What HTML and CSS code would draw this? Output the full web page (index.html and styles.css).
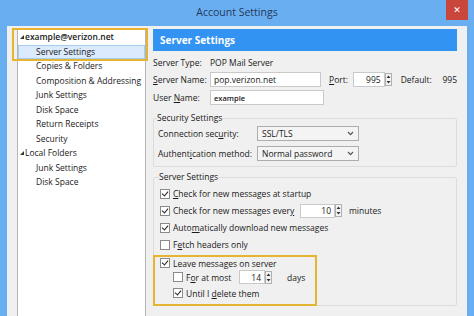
FILE: index.html
```html
<!DOCTYPE html>
<html lang="en">
<head>
    <meta charset="UTF-8">
    <title>Account Settings</title>
    <link rel="stylesheet" href="styles.css">
</head>
<body>
    <div class="window">
        <div class="titlebar">
            <div></div>
            <div class="title">Account Settings</div>
            <div class="close-wrap"><div class="close-btn">✕</div></div>
        </div>

        <div class="client">
            <!-- account tree -->
            <div class="tree">
                <div class="mark mark-tree">
                    <div class="node top account"><span class="twisty"></span>example@verizon.net</div>
                    <div class="node child selected">Server Settings</div>
                </div>
                <div class="node child">Copies &amp; Folders</div>
                <div class="node child">Composition &amp; Addressing</div>
                <div class="node child">Junk Settings</div>
                <div class="node child">Disk Space</div>
                <div class="node child">Return Receipts</div>
                <div class="node child">Security</div>
                <div class="node top"><span class="twisty"></span>Local Folders</div>
                <div class="node child">Junk Settings</div>
                <div class="node child">Disk Space</div>
            </div>

            <!-- settings pane -->
            <div class="pane">
                <div class="pane-header">Server Settings</div>

                <div class="row row-first">
                    <span class="label">Server Type:</span>
                    <span class="value">POP Mail Server</span>
                </div>
                <div class="row">
                    <span class="label"><u>S</u>erver Name:</span>
                    <span class="field field-wide">pop.verizon.net</span>
                    <span class="port-label"><u>P</u>ort:</span>
                    <span class="field field-port">995</span>
                    <span class="spin"><svg width="5" height="11" viewBox="0 0 5 11"><path d="M0.5 4L2.5 1.5L4.5 4Z M0.5 7L2.5 9.5L4.5 7Z" fill="#333"/></svg></span>
                    <span class="default-label">Default:</span>
                    <span class="default-value">995</span>
                </div>
                <div class="row">
                    <span class="label">User <u>N</u>ame:</span>
                    <span class="field field-wide field-bold">example</span>
                </div>

                <fieldset class="group group-security">
                    <legend>Security Settings</legend>
                    <div class="row">
                        <span class="sec-label">Connection sec<u>u</u>rity:</span>
                        <span class="select">SSL/TLS<svg class="chev" width="7" height="5" viewBox="0 0 7 5"><path d="M1 1L3.5 3.6L6 1" stroke="#555" stroke-width="1.2" fill="none"/></svg></span>
                    </div>
                    <div class="row">
                        <span class="sec-label">Authent<u>i</u>cation method:</span>
                        <span class="select">Normal password<svg class="chev" width="7" height="5" viewBox="0 0 7 5"><path d="M1 1L3.5 3.6L6 1" stroke="#555" stroke-width="1.2" fill="none"/></svg></span>
                    </div>
                </fieldset>

                <fieldset class="group group-server">
                    <legend>Server Settings</legend>
                    <div class="check-row">
                        <span class="box checked"></span><span><u>C</u>heck for new messages at startup</span>
                    </div>
                    <div class="check-row">
                        <span class="box checked"></span><span class="every">Check for new messages ever<u>y</u></span>
                        <span class="field field-num">10</span>
                        <span class="spin"><svg width="5" height="11" viewBox="0 0 5 11"><path d="M0.5 4L2.5 1.5L4.5 4Z M0.5 7L2.5 9.5L4.5 7Z" fill="#333"/></svg></span>
                        <span class="unit">minutes</span>
                    </div>
                    <div class="check-row">
                        <span class="box checked"></span><span>Auto<u>m</u>atically download new messages</span>
                    </div>
                    <div class="check-row">
                        <span class="box"></span><span>F<u>e</u>tch headers only</span>
                    </div>
                    <div class="mark mark-leave">
                        <div class="check-row leave">
                            <span class="box checked"></span><span>Leave messages on server</span>
                        </div>
                        <div class="check-row nested">
                            <span class="box"></span><span class="at-most">F<u>o</u>r at most</span>
                            <span class="field field-days">14</span>
                            <span class="spin"><svg width="5" height="11" viewBox="0 0 5 11"><path d="M0.5 4L2.5 1.5L4.5 4Z M0.5 7L2.5 9.5L4.5 7Z" fill="#333"/></svg></span>
                            <span class="unit">days</span>
                        </div>
                        <div class="check-row nested">
                            <span class="box checked"></span><span>Until I <u>d</u>elete them</span>
                        </div>
                    </div>
                </fieldset>
            </div>
        </div>
    </div>
</body>
</html>
```

FILE: styles.css
```css
body {
    margin: 0;
    font-family: "Open Sans", "Noto Sans", sans-serif;
    font-size: 8.5px;
    color: #1a1a1a;
}

.window {
    width: 474px;
    height: 316px;
    background-color: #6aaef2;
    display: flex;
    flex-direction: column;
    overflow: hidden;
}

.titlebar {
    height: 26px;
    flex-shrink: 0;
    display: grid;
    grid-template-columns: 1fr auto 1fr;
}

.title {
    font-size: 10.5px;
    line-height: 25px;
    color: #24395a;
}

.close-wrap {
    display: flex;
    justify-content: flex-end;
    padding-right: 6px;
}

.close-btn {
    width: 22px;
    height: 20px;
    background-color: #c8463c;
    color: #ffffff;
    font-family: "DejaVu Sans", sans-serif;
    font-size: 9px;
    font-weight: bold;
    line-height: 20px;
    text-align: center;
}

.client {
    flex: 1;
    margin: 0 7px;
    background-color: #f0f0f0;
    display: flex;
    gap: 7px;
    padding: 2px 0 0 10px;
}

/* Tree */
.tree {
    width: 129px;
    box-sizing: border-box;
    background-color: #fff;
    border: 1px solid #b4b4b4;
    border-bottom: none;
    padding-top: 1px;
}

.node {
    height: 14.5px;
    line-height: 14.5px;
    white-space: nowrap;
    box-sizing: border-box;
}

.node.top {
    padding-left: 2px;
    display: flex;
    align-items: center;
}

.node.account {
    font-weight: 600;
}

.twisty {
    width: 0;
    height: 0;
    border-left: 4px solid transparent;
    border-bottom: 4px solid #333;
    margin-right: 1px;
}

.node.child {
    padding-left: 18px;
}

.node.selected {
    margin-right: 1px;
    background-color: #dbeafc;
    border: 1px solid #a6cdf2;
    padding-left: 17px;
    line-height: 12.5px;
}

.mark {
    outline: 2px solid #e5b532;
}

.mark-tree {
    margin-left: -4px;
    padding-left: 4px;
    margin-right: -1px;
}

/* Pane */
.pane {
    width: 304px;
    margin-top: 1px;
}

.pane-header {
    height: 22px;
    background-color: #3393f2;
    color: #fff;
    font-weight: bold;
    font-size: 10px;
    padding-left: 7px;
    display: flex;
    align-items: center;
}

.row {
    display: flex;
    align-items: center;
    height: 15px;
    margin-top: 3px;
}

.row-first {
    margin-top: 4px;
    height: 14px;
}

.label {
    width: 57px;
    flex-shrink: 0;
}

.field {
    height: 15px;
    box-sizing: border-box;
    border: 1px solid #c9c9c9;
    background-color: #fff;
    padding: 0 3px;
    display: flex;
    align-items: center;
}

.field-wide {
    width: 114px;
}

.field-bold {
    font-weight: 600;
    font-size: 7.5px;
}

.port-label {
    margin-left: 8px;
    width: 25px;
}

.field-port {
    width: 32px;
    justify-content: flex-end;
}

.spin {
    width: 7px;
    height: 13px;
    box-sizing: border-box;
    border: 1px solid #b0b0b0;
    background-color: #f4f4f4;
    display: flex;
    align-items: center;
    justify-content: center;
}

.default-label {
    margin-left: 9px;
    width: 43px;
}

/* Group boxes */
.group {
    margin: 0;
    padding: 0 6px;
    border: 1px solid #dcdcdc;
    border-radius: 2px;
}

.group legend {
    padding: 0;
    margin-left: -1px;
    line-height: 12px;
}

.group-security {
    margin-top: 7px;
    padding-top: 2px;
    padding-bottom: 5px;
    padding-left: 4px;
}

.group-security .row:first-of-type {
    margin-top: 0;
}

.group-security .row {
    margin-top: 5px;
}

.sec-label {
    width: 99px;
}

.select {
    width: 102px;
    height: 15px;
    box-sizing: border-box;
    border: 1px solid #adadad;
    background-color: #f4f4f4;
    padding: 0 4px;
    display: flex;
    align-items: center;
    justify-content: space-between;
}

.group-server {
    margin-top: 4px;
    padding-top: 2px;
    padding-bottom: 1px;
}

.check-row {
    height: 17px;
    display: flex;
    align-items: center;
    white-space: nowrap;
}

.box {
    width: 10px;
    height: 10px;
    box-sizing: border-box;
    border: 1px solid #8a8a8a;
    background-color: #fff;
    margin-right: 3px;
    flex-shrink: 0;
    position: relative;
}

.box.checked::after {
    content: "";
    position: absolute;
    left: 2px;
    top: 0;
    width: 3px;
    height: 5px;
    border-right: 1.5px solid #222;
    border-bottom: 1.5px solid #222;
    transform: rotate(40deg);
}

.every {
    width: 127px;
}

.field-num {
    width: 35px;
    height: 14px;
    justify-content: flex-end;
}

.unit {
    margin-left: 7px;
}

.mark-leave {
    width: 160px;
    box-sizing: border-box;
    margin-top: 4px;
    margin-left: -5px;
    padding-left: 5px;
    padding-bottom: 3px;
}

.check-row.leave {
    height: 12px;
}

.check-row.nested {
    height: 16px;
    padding-left: 13px;
}

.at-most {
    width: 53px;
}

.field-days {
    width: 26px;
    height: 14px;
    justify-content: flex-end;
}

.field-days + .spin + .unit {
    margin-left: 15px;
}
```
